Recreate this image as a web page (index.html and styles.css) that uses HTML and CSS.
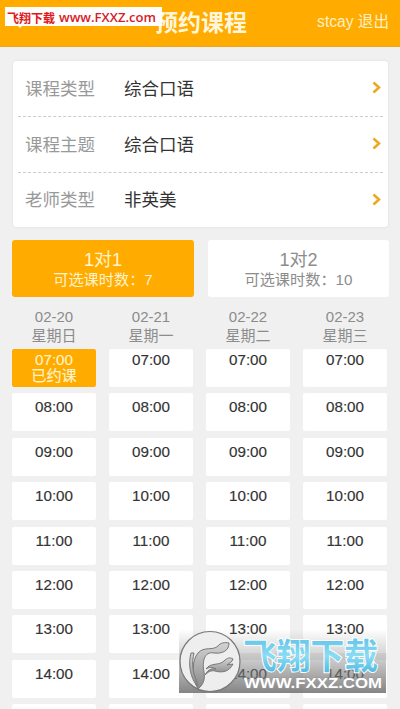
FILE: index.html
```html
<!DOCTYPE html>
<html lang="zh-CN">
<head>
<meta charset="utf-8">
<title>预约课程</title>
<link rel="stylesheet" href="styles.css">
</head>
<body>
<header class="header">
  <svg class="back" viewBox="0 0 10 16"><path d="M8 2 2 8l6 6"/></svg>
  <h1 class="title">预约课程</h1>
  <div class="account">stcay 退出</div>
  <svg class="site-tag" viewBox="0 0 157 19"><rect width="157" height="19" fill="#fff"/><text x="2" y="15.500" textLength="48" lengthAdjust="spacingAndGlyphs" class="tag-cn">飞翔下载</text><text x="54" y="14.500" textLength="97" lengthAdjust="spacingAndGlyphs" class="tag-url">www.FXXZ.com</text></svg>
</header>
<main class="page">
  <section class="options">
    <div class="option"><span class="label">课程类型</span><span class="value">综合口语</span><svg class="chevron" viewBox="0 0 9 13"><path d="M1.500 1.500 7 6.500l-5.500 5"/></svg></div>
    <div class="option"><span class="label">课程主题</span><span class="value">综合口语</span><svg class="chevron" viewBox="0 0 9 13"><path d="M1.500 1.500 7 6.500l-5.500 5"/></svg></div>
    <div class="option"><span class="label">老师类型</span><span class="value">非英美</span><svg class="chevron" viewBox="0 0 9 13"><path d="M1.500 1.500 7 6.500l-5.500 5"/></svg></div>
  </section>
  <section class="tabs">
    <div class="tab active"><div class="tab-name">1对1</div><div class="tab-count">可选课时数：7</div></div>
    <div class="tab"><div class="tab-name">1对2</div><div class="tab-count">可选课时数：10</div></div>
  </section>
  <section class="days">
    <div class="day">02-20<br>星期日</div><div class="day">02-21<br>星期一</div><div class="day">02-22<br>星期二</div><div class="day">02-23<br>星期三</div>
  </section>
  <section class="slots">
    <div class="slot first booked">07:00<br>已约课</div><div class="slot first">07:00</div><div class="slot first">07:00</div><div class="slot first">07:00</div>
    <div class="slot">08:00</div><div class="slot">08:00</div><div class="slot">08:00</div><div class="slot">08:00</div>
    <div class="slot">09:00</div><div class="slot">09:00</div><div class="slot">09:00</div><div class="slot">09:00</div>
    <div class="slot">10:00</div><div class="slot">10:00</div><div class="slot">10:00</div><div class="slot">10:00</div>
    <div class="slot">11:00</div><div class="slot">11:00</div><div class="slot">11:00</div><div class="slot">11:00</div>
    <div class="slot">12:00</div><div class="slot">12:00</div><div class="slot">12:00</div><div class="slot">12:00</div>
    <div class="slot">13:00</div><div class="slot">13:00</div><div class="slot">13:00</div><div class="slot">13:00</div>
    <div class="slot">14:00</div><div class="slot">14:00</div><div class="slot">14:00</div><div class="slot">14:00</div>
    <div class="slot"></div><div class="slot"></div><div class="slot"></div><div class="slot"></div>
  </section>
</main>
<svg class="watermark" viewBox="0 0 207 64">
  <defs>
    <linearGradient id="shade" x2="0" y2="1"><stop offset="0" stop-color="#777" stop-opacity="0"/><stop offset=".5" stop-color="#777" stop-opacity=".4"/><stop offset="1" stop-color="#777" stop-opacity=".9"/></linearGradient>
    <linearGradient id="cyan" x2="0" y2="1"><stop offset="0" stop-color="#62c3e8"/><stop offset=".5" stop-color="#8bdcf4"/><stop offset="1" stop-color="#45b5df"/></linearGradient>
    <linearGradient id="flame" x2="0" y2="1"><stop offset="0" stop-color="#d4d4d4"/><stop offset="1" stop-color="#888"/></linearGradient>
  </defs>
  <rect width="207" height="64" fill="url(#shade)"/>
  <circle cx="31" cy="32.500" r="30" fill="#eee" stroke="#777" stroke-width="1.200"/>
  <path class="flame" d="M19 60C12 47 13 31 19 24C25 17 34 22 39 17C41 14 46 13 50 14C50 22 43 25 35 24C25 22 23 33 25 43C26 50 25 55 19 60Z"/>
  <path class="flame" d="M12 24C9 35 11 48 18 57C19 52 15 48 14 40C13 34 14 29 15 24Z"/>
  <path class="flame" d="M27 40C32 33 40 37 45 32C48 29 51 28 54 30C53 33 51 34 48 36L54 35C50 43 43 44 36 42C32 41 29 43 26 46C28 42 31 39 37 40C33 38 30 38 27 40Z"/>
  <text x="64" y="39.500" textLength="135" lengthAdjust="spacingAndGlyphs" class="mark-cn">飞翔下载</text>
  <text x="65" y="59" textLength="138" lengthAdjust="spacingAndGlyphs" class="mark-url">WWW.FXXZ.COM</text>
</svg>
</body>
</html>
```
FILE: styles.css
```css
* { box-sizing: border-box; }
body {
  margin: 0;
  height: 709px;
  overflow: hidden;
  position: relative;
  background: #f0f0f0;
  font-family: "Liberation Sans", "Noto Sans CJK SC", sans-serif;
  color: #333;
}
.header {
  position: relative;
  height: 47px;
  display: flex;
  align-items: center;
  justify-content: center;
  background: #ffab00;
  border-bottom: 1px solid #eda51c;
}
.title {
  margin: 0;
  padding-left: 2px;
  font-size: 23px;
  line-height: 30px;
  font-weight: 700;
  color: #fff6dc;
}
.account {
  position: absolute;
  right: 11px;
  top: 12px;
  font-size: 15.6px;
  line-height: 20px;
  color: #fff0c4;
}
.back {
  position: absolute;
  left: 13px;
  top: 13px;
  width: 10px;
  height: 16px;
  fill: none;
  stroke: #fff6dc;
  stroke-width: 2.5;
}
.site-tag {
  position: absolute;
  left: 5px;
  top: 7px;
  width: 157px;
  height: 19px;
}
.tag-cn { font-size: 12.5px; font-weight: 700; fill: #e0191c; }
.tag-url { font: 600 12px "Open Sans", sans-serif; fill: #d6201f; }
.page { padding: 14px 12px 0; }
.options {
  height: 166px;
  margin-left: 1px;
  padding: 0 5px;
  display: grid;
  grid-template-rows: 56px 56px 54px;
  background: #fff;
  border-radius: 3px;
  box-shadow: 0 0 2px #d4d4d8;
}
.option {
  display: flex;
  align-items: center;
  padding: 0 2px 0 7px;
  font-size: 17.5px;
  line-height: 24px;
  border-bottom: 1px dashed #ccc;
}
.option:last-child { border-bottom: 0; }
.label { width: 99px; color: #999; }
.value { flex: 1; }
.chevron {
  width: 9px;
  height: 13px;
  margin-top: -2px;
  fill: none;
  stroke: #eba820;
  stroke-width: 2.5;
}
.tabs {
  margin-top: 13px;
  display: grid;
  grid-template-columns: 182px 181px;
  gap: 14px;
}
.tab {
  height: 57px;
  padding-top: 10px;
  text-align: center;
  border-radius: 3px;
  background: #fff;
  color: #8c8c8c;
}
.tab-name { font-size: 18px; line-height: 20px; }
.tab-count { font-size: 15.2px; line-height: 20px; }
.days, .slots {
  display: grid;
  grid-template-columns: repeat(4, 84px);
  column-gap: 13px;
  text-align: center;
}
.days {
  margin-top: 10px;
  height: 42px;
  font-size: 15px;
  line-height: 19px;
  color: #8c8c8c;
}
.slots {
  grid-auto-rows: 38px;
  row-gap: 6.4px;
}
.slot {
  padding-top: 5px;
  border-radius: 2px;
  background: #fff;
  font-size: 15.2px;
  line-height: 17px;
  -webkit-text-stroke: .15px;
}
.slot.first { padding-top: 2px; }
.slot.booked { line-height: 15.5px; padding-top: 3px; }
.tab.active, .slot.booked { background: #ffab00; color: #fff3cc; }
.watermark {
  position: absolute;
  left: 179px;
  top: 629px;
  width: 207px;
  height: 64px;
}
.flame { fill: url(#flame); stroke: #777; stroke-width: 1; }
.mark-cn {
  font-size: 35px;
  font-weight: 700;
  fill: url(#cyan);
  stroke: #fff;
  stroke-width: 2;
  paint-order: stroke;
}
.mark-url {
  font-size: 15px;
  font-weight: 700;
  fill: #fff;
  stroke: #999;
  stroke-width: .8;
  paint-order: stroke;
}
```
